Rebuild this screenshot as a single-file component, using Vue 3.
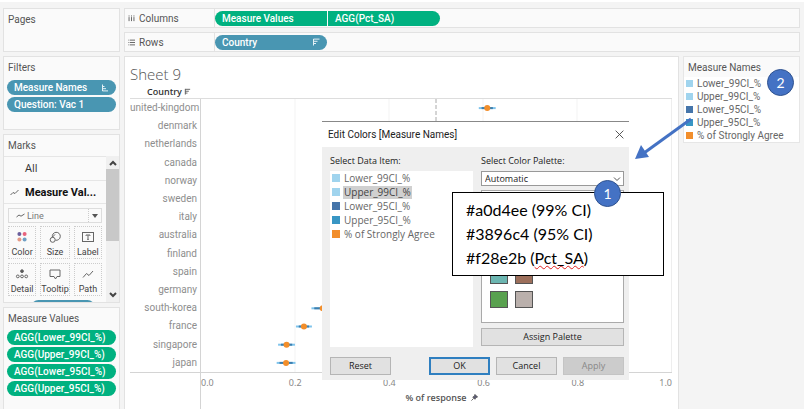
<script setup>
import { ref } from 'vue'

const filters = [
  { name: 'Measure Names', sorted: true },
  { name: 'Question: Vac 1', sorted: false },
]
const measureValues = ['AGG(Lower_99CI_%)', 'AGG(Upper_99CI_%)', 'AGG(Lower_95CI_%)', 'AGG(Upper_95CI_%)']
const items = [
  { name: 'Lower_99CI_%', tone: 'light' },
  { name: 'Upper_99CI_%', tone: 'light' },
  { name: 'Lower_95CI_%', tone: 'navy' },
  { name: 'Upper_95CI_%', tone: 'blue' },
  { name: '% of Strongly Agree', tone: 'orange' },
]
const selected = ref('Upper_99CI_%')
const countries = [
  'united-kingdom', 'denmark', 'netherlands', 'canada', 'norway', 'sweden', 'italy', 'australia',
  'finland', 'spain', 'germany', 'south-korea', 'france', 'singapore', 'japan',
]
// Share of respondents in percent, with the 99% and 95% interval half-widths.
const marks = [
  { country: 'united-kingdom', value: 60.9, outer: 1.8, inner: 1.2 },
  { country: 'south-korea', value: 25.9, outer: 2.4, inner: 1.8 },
  { country: 'france', value: 21.9, outer: 1.7, inner: 1.1 },
  { country: 'singapore', value: 18.2, outer: 1.8, inner: 1.2 },
  { country: 'japan', value: 18.1, outer: 2, inner: 1.4 },
]
const rowY = (country) => `${((countries.indexOf(country) + 0.5) / countries.length) * 100}%`
const ticks = ['0.0', '0.2', '0.4', '0.6', '0.8', '1.0']
const palette = ['teal', 'brown', 'green', 'taupe']
</script>

<template>
  <div class="app">
    <aside class="side">
      <section class="card pages"><h2>Pages</h2></section>

      <section class="card filters">
        <h2>Filters</h2>
        <div class="pills">
          <button v-for="f in filters" :key="f.name" class="pill dim">
            {{ f.name }}
            <svg v-if="f.sorted" class="sort" viewBox="0 0 8 8"><path d="M1.5 0.5V7M1.5 2.5H3.5M1.5 4.7H5M1.5 6.9H7" /></svg>
          </button>
        </div>
      </section>

      <section class="card marks">
        <h2>Marks</h2>
        <div class="marks-body">
          <div class="marks-main">
            <div class="layer">All</div>
            <div class="layer current">
              <svg class="line-ico" viewBox="0 0 9 7"><path d="M.5 6L3 3.5L5 4.5L8.5 1" /></svg>
              Measure Val...
            </div>
            <div class="mark-type">
              <svg class="line-ico" viewBox="0 0 9 7"><path d="M.5 5L3 3L5 4.2L8.5 2" /></svg>
              <span>Line</span>
              <i class="drop"><svg viewBox="0 0 6 4"><path d="M0 0H6L3 4Z" /></svg></i>
            </div>
            <div class="cells">
              <button class="cell">
                <svg viewBox="0 0 14 14">
                  <circle cx="4.4" cy="4" r="2" fill="#6a5f9c" /><circle cx="9.6" cy="4" r="2" fill="#e8637c" />
                  <circle cx="4.4" cy="9.4" r="2" fill="#e59a86" /><circle cx="9.6" cy="9.4" r="2" fill="#6f9fc4" />
                </svg>Color
              </button>
              <button class="cell">
                <svg class="st" viewBox="0 0 14 14"><path d="M4.4 7.2A4 4 0 1 1 7.4 10.2" /><circle cx="4.7" cy="9.8" r="2.5" /><path d="M4.4 7.2L7 4.4" /></svg>Size
              </button>
              <button class="cell">
                <svg class="st" viewBox="0 0 14 14"><rect x="1.5" y="2.5" width="11" height="9" /><path d="M5 5.8V5H9V5.8M7 5V9.4M6.2 9.4H7.8" /></svg>Label
              </button>
              <button class="cell">
                <svg class="st" viewBox="0 0 14 14"><circle cx="7" cy="4.2" r="1.4" fill="#555" /><circle cx="2.8" cy="9.4" r="1.4" /><circle cx="7" cy="9.4" r="1.4" /><circle cx="11.2" cy="9.4" r="1.4" /></svg>Detail
              </button>
              <button class="cell">
                <svg class="st" viewBox="0 0 14 14"><path d="M2 3H12V9.5H9L7.5 12L6 9.5H2Z" /></svg>Tooltip
              </button>
              <button class="cell">
                <svg class="st" viewBox="0 0 14 14"><path d="M2 10.5L5.5 6.5L8 8.5L12 4" /></svg>Path
              </button>
            </div>
            <div class="peek"></div>
          </div>
          <div class="scroll">
            <svg viewBox="0 0 8 6"><path d="M1 5L4 2L7 5" /></svg>
            <div class="track"><div class="thumb"></div></div>
            <svg viewBox="0 0 8 6"><path d="M1 1L4 4L7 1" /></svg>
          </div>
        </div>
      </section>

      <section class="card values">
        <h2>Measure Values</h2>
        <div class="pills">
          <button v-for="m in measureValues" :key="m" class="pill">{{ m }}</button>
        </div>
      </section>
    </aside>

    <main class="work">
      <div class="card shelf">
        <div class="shelf-name">
          <svg viewBox="0 0 8 8"><path d="M1.2 0.5V1.7M4 0.5V1.7M6.8 0.5V1.7M1.2 2.4V7M4 2.4V7M6.8 2.4V7" /></svg>Columns
        </div>
        <div class="shelf-pills">
          <button class="pill first">Measure Values</button>
          <button class="pill last">AGG(Pct_SA)</button>
        </div>
      </div>
      <div class="card shelf">
        <div class="shelf-name">
          <svg viewBox="0 0 8 8"><path d="M0.5 1.3H1.5M2.3 1.3H8M0.5 4H1.5M2.3 4H8M0.5 6.7H1.5M2.3 6.7H8" /></svg>Rows
        </div>
        <div class="shelf-pills">
          <button class="pill dim">Country<svg class="sort" viewBox="0 0 8 8"><path d="M1.5 7.5V1M1.5 1.1H7.5M1.5 3.3H5.5M1.5 5.5H4" /></svg></button>
        </div>
      </div>

      <div class="lower">
        <section class="sheet">
          <h1>Sheet 9</h1>
          <div class="head">Country<svg viewBox="0 0 8 8"><path d="M1.5 7.5V1M1.5 1.5H7M1.5 3.7H5.5M1.5 5.8H4" /></svg></div>
          <div class="chart">
            <div class="names"><span v-for="c in countries" :key="c">{{ c }}</span></div>
            <svg class="plot">
              <line v-for="g in [20, 40, 60, 80]" :key="g" class="grid" :x1="g + '%'" :x2="g + '%'" y1="0" y2="100%" />
              <line class="refline" x1="50%" x2="50%" y1="0" y2="100%" />
              <g v-for="m in marks" :key="m.country">
                <line class="ci99" :x1="m.value - m.outer + '%'" :x2="m.value + m.outer + '%'" :y1="rowY(m.country)" :y2="rowY(m.country)" />
                <line class="ci95" :x1="m.value - m.inner + '%'" :x2="m.value + m.inner + '%'" :y1="rowY(m.country)" :y2="rowY(m.country)" />
                <circle class="dot" :cx="m.value + '%'" :cy="rowY(m.country)" r="3" />
              </g>
            </svg>
          </div>
          <div class="foot">
            <div class="axis">
              <svg class="ticks">
                <text v-for="(t, i) in ticks" :key="t" :x="i * 20 + '%'" y="13" :class="{ start: i === 0, end: i === 5 }">{{ t }}</text>
              </svg>
              <div class="axis-title">% of response
                <svg viewBox="0 0 8 8"><path d="M4.5 .5L7.5 3.5L5.5 4L4.5 6L2 3.5L4 2.5Z" /><path d="M3 5L.5 7.5" /></svg>
              </div>
            </div>
          </div>
        </section>

        <aside class="legend">
          <h2>Measure Names</h2>
          <ul>
            <li v-for="i in items" :key="i.name"><i class="swatch" :class="i.tone"></i>{{ i.name }}</li>
          </ul>
        </aside>
      </div>
    </main>

    <div class="dialog" role="dialog" aria-labelledby="dlg-title">
      <header>
        <span id="dlg-title">Edit Colors [Measure Names]</span>
        <button class="close" aria-label="Close"><svg viewBox="0 0 10 10"><path d="M.7 .7L9.3 9.3M9.3 .7L.7 9.3" /></svg></button>
      </header>
      <div class="panes">
        <div class="pane">
          <span class="label">Select Data Item:</span>
          <ul class="data-items">
            <li v-for="i in items" :key="i.name" @click="selected = i.name">
              <i class="swatch" :class="i.tone"></i><span :class="{ picked: i.name === selected }">{{ i.name }}</span>
            </li>
          </ul>
        </div>
        <div class="pane">
          <label class="label" for="palette">Select Color Palette:</label>
          <div class="select-wrap">
            <select id="palette"><option>Automatic</option></select>
            <svg viewBox="0 0 8 6"><path d="M1 1.5L4 4.5L7 1.5" /></svg>
          </div>
          <div class="palette">
            <button v-for="p in palette" :key="p" class="color" :class="p" :aria-label="p"></button>
          </div>
          <button class="btn">Assign Palette</button>
        </div>
      </div>
      <footer>
        <button class="btn reset">Reset</button>
        <button class="btn ok">OK</button>
        <button class="btn">Cancel</button>
        <button class="btn" disabled>Apply</button>
      </footer>
    </div>

    <div class="note">
      <p>#a0d4ee (99% CI)</p>
      <p>#3896c4 (95% CI)</p>
      <p>#f28e2b (<span class="typo">Pct_SA</span>)</p>
    </div>
    <svg class="arrow" viewBox="0 0 60 46"><path d="M57 3L10 37" /><polygon points="1,43 7,29 15,41" /></svg>
    <div class="badge one">1</div>
    <div class="badge two">2</div>
  </div>
</template>

<style>
body { background: #fff; }
</style>

<style scoped>
* { box-sizing: border-box; margin: 0; padding: 0; }
button, select { font: inherit; color: inherit; border: 0; background: none; }
ul { list-style: none; }
svg { display: block; flex: none; fill: none; stroke: #555; stroke-width: 1; }
.app {
  position: relative; display: flex; gap: 4px; height: 100vh; padding: 8px 6px 7px 3px;
  background: linear-gradient(#fff, #fff) top / 100% 2px no-repeat, linear-gradient(#fff, #fff) bottom / 100% 7px no-repeat, linear-gradient(#fff, #fff) right / 2px 100% no-repeat, #f4f4f4;
  font-family: Roboto, "Noto Sans", sans-serif; font-size: 10px; color: #555; overflow: hidden;
}
.card { background: #fafafa; border: 1px solid #e2e2e2; }
h2 { font-size: 10px; font-weight: 400; line-height: 14px; padding: 4px 4px 0; color: #555; white-space: nowrap; }
.side { width: 117px; flex: none; display: flex; flex-direction: column; gap: 4px; }
.pages { height: 44px; }
.filters { height: 74px; }
.marks { height: 169px; display: flex; flex-direction: column; }
.values { flex: 1; border-bottom: 0; }
.pills { display: flex; flex-direction: column; gap: 2px; padding: 5px 3px 0; }
.values .pills { padding-top: 4px; }
.pill {
  height: 15px; padding: 0 7px; border-radius: 8px; background: #00b180; color: #fff; font-weight: 500;
  font-size: 10px; line-height: 15px; text-align: left; display: flex; align-items: center; justify-content: space-between; white-space: nowrap;
}
.pill.dim { background: #4996b2; }
.sort { width: 8px; height: 8px; stroke: #e4f1f6; }

.marks-body { flex: 1; display: flex; margin-top: 3px; min-height: 0; }
.marks-main { flex: 1; min-width: 0; overflow: hidden; }
.layer { height: 24px; border-top: 1px solid #e6e6e6; padding-left: 21px; line-height: 21px; font-family: "Open Sans", sans-serif; font-size: 11px; color: #333; white-space: nowrap; }
.current { display: flex; align-items: center; gap: 6px; padding-left: 6px; font-family: Roboto, sans-serif; font-weight: 700; color: #111; border-bottom: 1px solid #e6e6e6; }
.line-ico { width: 9px; height: 7px; stroke: #666; }
.mark-type { display: flex; align-items: center; gap: 2px; height: 15px; margin: 4px 4px 0; padding-left: 7px; border: 1px solid #ddd; font-size: 9px; color: #777; }
.drop { margin-left: auto; width: 13px; height: 100%; border-left: 1px dotted #ccc; display: grid; place-items: center; }
.drop svg { width: 6px; height: 4px; fill: #555; stroke: none; }
.cells { display: grid; grid-template-columns: repeat(3, 1fr); gap: 4px; padding: 3px 4px 0; }
.cell { height: 33px; border: 1px dotted #ccc; display: flex; flex-direction: column; align-items: center; justify-content: flex-end; gap: 2px; font-size: 9px; line-height: 12px; color: #444; }
.cell svg { width: 14px; height: 14px; stroke: none; }
.cell .st { stroke: #666; }
.peek { height: 15px; margin: 4px 11px 0 27px; border-radius: 8px; background: #4996b2; }
.scroll { width: 13px; background: #f0f0f0; display: flex; flex-direction: column; align-items: center; padding: 4px 0; gap: 3px; }
.scroll svg { width: 8px; height: 6px; stroke: #444; stroke-width: 2; }
.track { flex: 1; width: 100%; }
.thumb { height: 60%; background: #c8c8c8; }

.work { flex: 1; min-width: 0; display: flex; flex-direction: column; gap: 4px; }
.shelf { height: 20px; flex: none; display: flex; }
.shelf-name { width: 90px; border-right: 1px solid #e2e2e2; display: flex; align-items: center; gap: 4px; padding-left: 3px; }
.shelf-name svg { width: 7px; height: 7px; }
.shelf-pills { display: flex; gap: 1px; align-items: center; }
.shelf-pills .pill { width: 112px; }
.pill.first { border-radius: 8px 0 0 8px; }
.pill.last { border-radius: 0 8px 8px 0; }
.lower { flex: 1; min-height: 0; display: flex; gap: 4px; align-items: flex-start; }
.sheet { flex: 1; align-self: stretch; min-width: 0; display: flex; flex-direction: column; background: #fff; border: 1px solid #e2e2e2; border-bottom: 0; padding: 6px 6px 0 5px; }
h1 { font-family: "Open Sans", sans-serif; font-size: 15px; font-weight: 300; line-height: 22px; color: #555; }
.head { width: 71px; display: flex; align-items: center; justify-content: center; gap: 2px; height: 13px; padding-left: 7px; font-family: "Open Sans", sans-serif; font-size: 9px; font-weight: 600; color: #333; }
.head svg { width: 7px; height: 7px; }
.chart { flex: 1; min-height: 0; display: flex; border-top: 1px solid #ddd; border-bottom: 1px solid #d4d4d4; }
.names { width: 70px; flex: none; display: grid; grid-template-columns: minmax(0, 1fr); grid-auto-rows: 1fr; align-items: center; text-align: right; padding-right: 3px; font-size: 10px; line-height: 12px; color: #8e8e8e; white-space: nowrap; }
.plot { flex: 1; min-width: 0; height: 100%; border-left: 1px solid #d4d4d4; border-right: 1px solid #eee; }
.grid { stroke: #f3f3f3; }
.refline { stroke: #aaa; stroke-dasharray: 4 2; }
.ci99 { stroke: #7fc4ec; stroke-width: 2; }
.ci95 { stroke: #3d7eae; stroke-width: 2; }
.dot { fill: #f28e2b; stroke: none; }
.foot { height: 36px; display: flex; padding-left: 70px; }
.axis { flex: 1; border-left: 1px solid #d4d4d4; }
.ticks { width: 100%; height: 18px; overflow: visible; }
.ticks text { fill: #888; stroke: none; font-family: "Noto Sans", sans-serif; font-size: 9px; text-anchor: middle; }
.ticks .start { text-anchor: start; }
.ticks .end { text-anchor: end; }
.axis-title { display: flex; align-items: center; justify-content: center; gap: 4px; padding-left: 10px; font-family: "Open Sans", sans-serif; font-size: 9px; line-height: 13px; font-weight: 600; color: #555; }
.axis-title svg { width: 7px; height: 7px; fill: #557; }
.legend { width: 117px; flex: none; background: #fff; border: 1px solid #e6e6e6; }
.legend h2 { background: #fafafa; padding-bottom: 2px; }
.legend ul { padding-left: 2px; }
.legend li { display: flex; align-items: center; gap: 4px; font-size: 10px; height: 13px; line-height: 13px; color: #666; white-space: nowrap; }
.swatch { width: 7px; height: 7px; flex: none; }
.light { background: #a0d4ee; }
.navy { background: #4575aa; }
.blue { background: #3896c4; }
.orange { background: #f28e2b; }

.dialog { position: absolute; left: 322px; top: 121px; width: 307px; background: #efefef; border-top: 1px solid #888; font-family: "Open Sans", "Noto Sans", sans-serif; color: #222; }
header { display: flex; justify-content: space-between; align-items: center; height: 25px; padding: 0 5px 0 6px; background: #fff; font-family: Roboto, sans-serif; }
.close svg { width: 9px; height: 9px; stroke: #444; }
.panes { display: flex; gap: 8px; padding: 7px 5px 0 8px; }
.pane { flex: 1; display: flex; flex-direction: column; }
.label { height: 17px; line-height: 14px; font-size: 9px; }
.data-items { height: 176px; background: #fff; padding: 0 2px; }
.data-items li { display: flex; align-items: center; gap: 3px; height: 14px; font-size: 10px; line-height: 13px; color: #666; white-space: nowrap; }
.data-items .swatch { width: 8px; height: 8px; }
.data-items span { padding: 0 1px; }
.picked { background: #d0d0d0; color: #444; }
.select-wrap { display: flex; align-items: center; background: #fff; border: 1px solid #999; height: 15px; padding-right: 2px; }
select { appearance: none; flex: 1; padding-left: 3px; font-size: 9px; line-height: 13px; outline: 0; }
.select-wrap svg { width: 8px; height: 6px; }
.palette { height: 133px; margin: 4px 0 5px; background: #fff; border: 1px solid #aaa; padding: 0 8px 14px; display: grid; grid-template-columns: 18px 18px; gap: 7px; align-content: end; }
.color { height: 17px; border: 1px solid #555; }
.teal { background: #6cb6b1; }
.brown { background: #9c6f5b; }
.green { background: #59a14f; }
.taupe { background: #bab0ac; }
.btn { height: 18px; background: #e1e1e1; border: 1px solid #b5b5b5; font-size: 9px; line-height: 14px; text-align: center; color: #222; }
footer { display: flex; gap: 6px; padding: 10px 5px 5px 8px; }
footer .btn { width: 61px; }
.reset { margin-right: auto; }
.ok { border: 2px solid #2f7fc0; line-height: 12px; }
.btn:disabled { background: #ccc; border-color: #c4c4c4; color: #888; }

.note { position: absolute; left: 452px; top: 192px; width: 212px; background: #fff; border: 1px solid #000; padding: 5px 13px; font-family: Lato, sans-serif; font-size: 16px; line-height: 24px; color: #000; white-space: nowrap; }
.typo { text-decoration: underline wavy #e02020 1px; text-underline-offset: 1px; text-decoration-skip-ink: none; }
.arrow { position: absolute; left: 634px; top: 116px; width: 60px; height: 46px; stroke: #4472c4; stroke-width: 3; }
.arrow polygon { fill: #4472c4; stroke: none; }
.badge { position: absolute; width: 27px; height: 27px; border-radius: 50%; background: #4472c4; border: 1px solid #2f528f; color: #fff; font-family: Lato, sans-serif; font-size: 14px; line-height: 26px; text-align: center; }
.one { left: 594px; top: 180px; }
.two { left: 767px; top: 69px; }
</style>
